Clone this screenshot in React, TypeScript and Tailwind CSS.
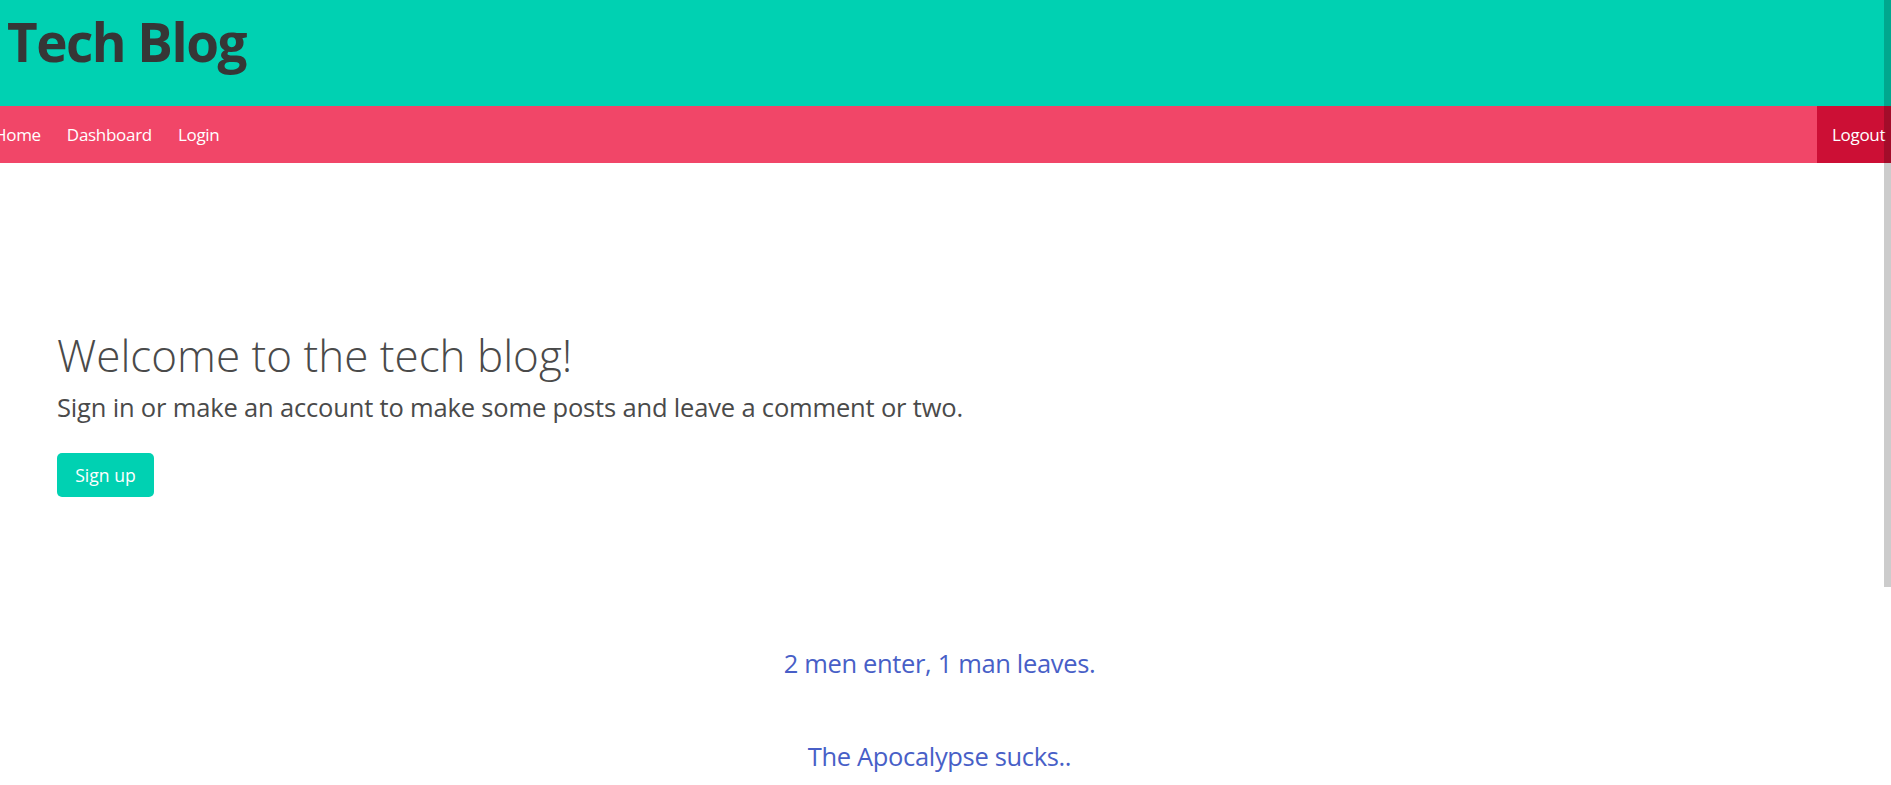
const font = { fontFamily: '"Open Sans", "Noto Sans", sans-serif' };

const posts = ['2 men enter, 1 man leaves.', 'The Apocalypse sucks..'];

export default function App() {
  return (
    <div className="relative h-[785px] overflow-hidden bg-white" style={font}>
      <header className="h-[106px] bg-[#00d1b2] pl-[7px] pt-[12px]">
        <h1 className="text-[53px] font-bold leading-[1.125] tracking-[-1.5px] text-[#363636]">Tech Blog</h1>
      </header>

      <nav className="flex h-[57px] items-stretch bg-[#f14668] text-[17px] tracking-[-0.3px] text-white">
        <a className="-ml-[19px] flex items-center px-[13px]">Home</a>
        <a className="flex items-center px-[13px]">Dashboard</a>
        <a className="flex items-center px-[13px]">Login</a>
        <a className="ml-auto flex w-[74px] items-center bg-[#cc0f35] px-[15px]">Logout</a>
      </nav>

      <section className="px-[57px] pt-[168px]">
        <h2 className="text-[44px] font-light leading-[1.125] text-[#4a4a4a]">Welcome to the tech blog!</h2>
        <p className="mt-[11px] text-[25.5px] leading-[1.25] tracking-[-0.17px] text-[#4a4a4a]">
          Sign in or make an account to make some posts and leave a comment or two.
        </p>
        <button className="mt-[30px] h-[44px] w-[97px] rounded-[5px] bg-[#00d1b2] text-[17.6px] text-white">
          Sign up
        </button>
      </section>

      <ul className="mt-[150px] flex flex-col items-center gap-[60px] pr-[12px]">
        {posts.map((p) => (
          <li key={p}>
            <a className="text-[25.5px] leading-[33px] tracking-[-0.34px] text-[#485fc7]">{p}</a>
          </li>
        ))}
      </ul>

      {/* overlay scrollbar thumb */}
      <div className="absolute right-0 top-0 h-[587px] w-[7px] bg-black/20" />
    </div>
  );
}
